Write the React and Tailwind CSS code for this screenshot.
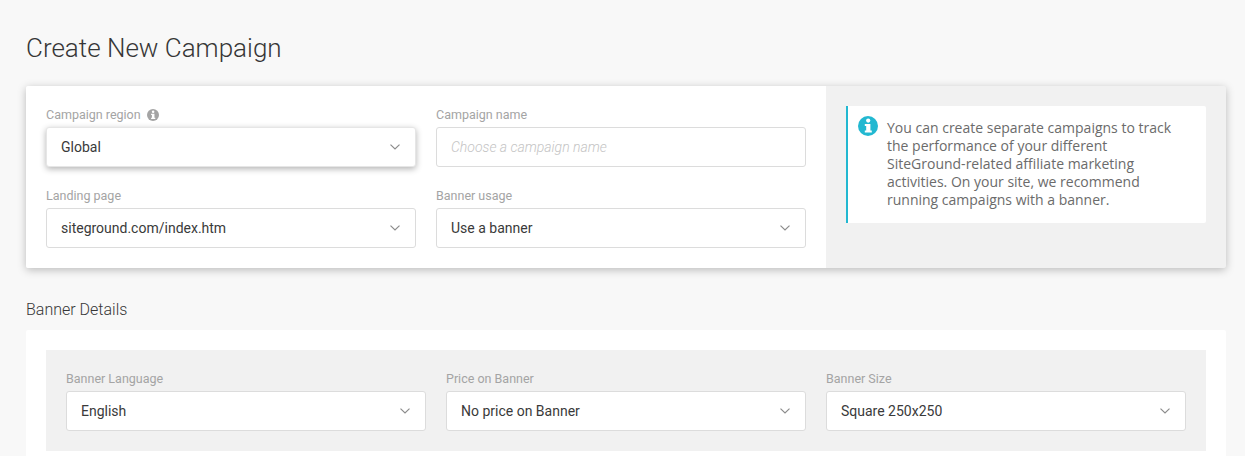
function Chevron() {
  return (
    <svg width="10" height="6" viewBox="0 0 10 6" fill="none" className="shrink-0 text-[#8c8c8c]">
      <path d="M0.5 0.6 L5 5 L9.5 0.6" stroke="currentColor" strokeWidth="1.2" />
    </svg>
  );
}

function InfoGlyph({ size, color }) {
  return (
    <svg width={size} height={size} viewBox="0 0 20 20" className="shrink-0">
      <circle cx="10" cy="10" r="10" fill={color} />
      <circle cx="10.2" cy="4.6" r="2.1" fill="#fff" />
      <path d="M6.8 8 H12.4 V14.6 H13.8 V16.6 H6.8 V14.6 H8.2 V10 H6.8 Z" fill="#fff" />
    </svg>
  );
}

function Field({ label, value, placeholder, raised, hint }) {
  return (
    <div className="min-w-0 flex-1">
      <div className="mb-[4px] flex h-[17px] items-center gap-[6px] text-[12.5px] leading-[17px] text-[#a4a4a4]">
        <span>{label}</span>
        {hint && <InfoGlyph size={12} color="#a4a4a4" />}
      </div>
      <div
        className={
          "flex h-10 items-center justify-between rounded-[3px] border bg-white pl-[14px] pr-[15px] text-sm " +
          (raised
            ? "border-[#e6e6e6] shadow-[0_2px_6px_rgba(0,0,0,0.3)]"
            : "border-[#dcdcdc]")
        }
      >
        {value ? (
          <span className="text-[#3a3a3a]">{value}</span>
        ) : (
          <span className="italic font-light text-[#c4c4c4]">{placeholder}</span>
        )}
        {value && <Chevron />}
      </div>
    </div>
  );
}

export default function App() {
  return (
    <div className="h-[456px] overflow-hidden bg-[#f8f8f8] pl-[26px] pr-[19px] pt-[32px] font-['Roboto',sans-serif]">
      <h1 className="h-[32px] text-[26px] font-light leading-[32px] text-[#363636]">Create New Campaign</h1>

      <div className="mt-[22px] flex h-[182px] rounded-[2px] bg-[#f1f1f1] shadow-[0_2px_8px_rgba(0,0,0,0.25)]">
        <div className="flex w-[800px] flex-col gap-[20px] rounded-l-[2px] bg-white p-[20px]">
          <div className="flex gap-[20px]">
            <Field label="Campaign region" value="Global" raised hint />
            <Field label="Campaign name" placeholder="Choose a campaign name" />
          </div>
          <div className="flex gap-[20px]">
            <Field label="Landing page" value="siteground.com/index.htm" />
            <Field label="Banner usage" value="Use a banner" />
          </div>
        </div>
        <div className="flex-1 p-[20px]">
          <div className="flex h-[117px] gap-[9px] rounded-r-[2px] border-l-2 border-[#22b8d1] bg-white pl-[10px] pr-[20px] pt-[10px]">
            <InfoGlyph size={20} color="#22b8d1" />
            <p className="pt-[3px] font-['Open_Sans',sans-serif] text-sm leading-[18px] text-[#6b6b6b]">
              You can create separate campaigns to track the performance of your different SiteGround-related affiliate marketing activities. On your site, we recommend running campaigns with a banner.
            </p>
          </div>
        </div>
      </div>

      <h2 className="mt-[32px] h-[20px] text-base font-light leading-[20px] text-[#363636]">Banner Details</h2>

      <div className="mt-[10px] rounded-[2px] bg-white p-[20px]">
        <div className="flex gap-[20px] bg-[#f1f1f1] p-[20px]">
          <Field label="Banner Language" value="English" />
          <Field label="Price on Banner" value="No price on Banner" />
          <Field label="Banner Size" value="Square 250x250" />
        </div>
      </div>
    </div>
  );
}
